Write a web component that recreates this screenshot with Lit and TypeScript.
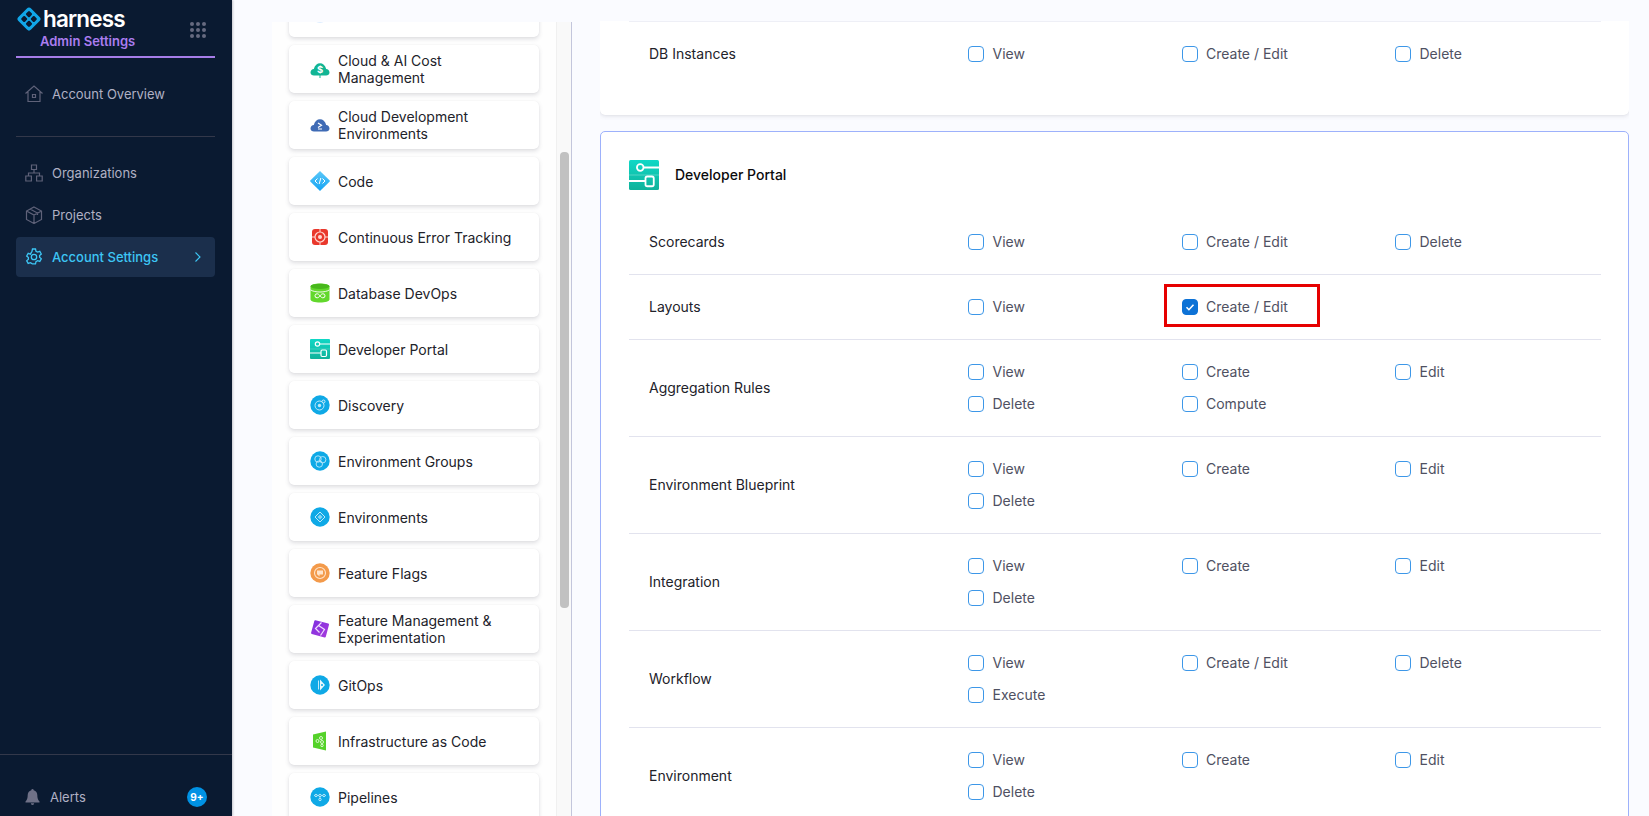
import {LitElement, css, html, svg} from "lit";
import {customElement} from "lit/decorators.js";

// module list on the left, small product icons are hand drawn
const icon = (body: unknown) => html`<svg class="mod-icon" viewBox="0 0 20 20" width="20" height="20">${body}</svg>`;

const circle = (fill: string, inner: unknown) =>
  icon(svg`<circle cx="10" cy="10" r="9.700" fill=${fill}></circle>${inner}`);

const modules: {name: string; icon: unknown}[] = [
  {name: "", icon: circle("#d4e8ff", svg``)},
  {
    name: "Cloud & AI Cost Management",
    icon: icon(svg`<path d="M.5 13.500c0-2.100 1.500-3.400 3.300-3.600C4.700 6.200 7.300 4.300 10 4.300s5.300 1.900 6.200 5.600c1.800.2 3.300 1.500 3.300 3.600 0 2-1.600 3-3.400 3H3.900C2.100 16.500.5 15.500.5 13.500z" fill="#12b594"></path>
      <text x="10" y="14" text-anchor="middle" font-size="9.500" font-weight="700" fill="#fff" font-family="Inter, sans-serif">$</text>
      <rect x="9.500" y="16" width="1" height="3" fill="#12b594"></rect>`),
  },
  {
    name: "Cloud Development Environments",
    icon: icon(svg`<path d="M.5 13.500c0-2.100 1.500-3.400 3.300-3.600C4.700 6.200 7.200 4.200 10 4.200s5.300 2 6.200 5.700c1.800.2 3.300 1.500 3.300 3.600 0 2-1.600 3-3.400 3H3.900C2.100 16.500.5 15.500.5 13.500z" fill="#3f6bb5"></path>
      <path d="M8 8l3.500 2.200L8 12.400M8 14h4" fill="none" stroke="#fff" stroke-width="1.200"></path>`),
  },
  {
    name: "Code",
    icon: icon(svg`<defs><linearGradient id="cg" x1="0" y1="0" x2="0" y2="1"><stop offset="0" stop-color="#5cc8f8"></stop><stop offset="1" stop-color="#14a4f4"></stop></linearGradient></defs>
      <path d="M10 0l9.500 9.300a1 1 0 010 1.400L10 20 .5 10.700a1 1 0 010-1.400z" fill="url(#cg)"></path>
      <path d="M7.500 7.500L5 10l2.500 2.500M12.500 7.500L15 10l-2.500 2.500M10.800 7l-1.600 6" fill="none" stroke="#fff" stroke-width="1"></path>`),
  },
  {
    name: "Continuous Error Tracking",
    icon: icon(svg`<rect x="2" y="2" width="16" height="16" rx="3" fill="#e9382c"></rect>
      <circle cx="10" cy="10" r="5" fill="none" stroke="#ffd8d2" stroke-width="1.200"></circle>
      <circle cx="10" cy="10" r="2" fill="#ffd8d2"></circle>
      <path d="M10 2v3M10 15v3M2 10h3M15 10h3" stroke="#ffd8d2" stroke-width="1"></path>`),
  },
  {
    name: "Database DevOps",
    icon: icon(svg`<path d="M.5 3.500C.5 1.800 4.700.5 10 .5s9.500 1.300 9.500 3v13c0 1.700-4.200 3-9.500 3s-9.500-1.300-9.500-3z" fill="#62d82c"></path>
      <ellipse cx="10" cy="3.300" rx="9.500" ry="2.600" fill="#48b81c"></ellipse>
      <path d="M.5 6.800c2 1.500 5.500 2.200 9.500 2.200s7.500-.7 9.500-2.200" fill="none" stroke="#fff" stroke-width=".9"></path>
      <path d="M10 12.800c-1-1.500-2-2-3-2a2 2 0 000 4c1 0 2-.5 3-2zm0 0c1-1.500 2-2 3-2a2 2 0 010 4c-1 0-2-.5-3-2z" fill="none" stroke="#fff" stroke-width="1"></path>`),
  },
  {name: "Developer Portal", icon: portalIcon(20)},
  {
    name: "Discovery",
    icon: circle("#0fa9e6", svg`<circle cx="9.500" cy="10.500" r="4.500" fill="none" stroke="#bfe9fa" stroke-width="1"></circle>
      <circle cx="9.500" cy="10.500" r="1.700" fill="#bfe9fa"></circle>
      <circle cx="13.500" cy="6.500" r="1.500" fill="#0fa9e6" stroke="#dff5fd" stroke-width=".9"></circle>`),
  },
  {
    name: "Environment Groups",
    icon: circle("#0fa9e6", svg`<circle cx="8" cy="8" r="3.200" fill="none" stroke="#bfe9fa" stroke-width=".9"></circle>
      <circle cx="12.700" cy="8.700" r="3.200" fill="none" stroke="#bfe9fa" stroke-width=".9"></circle>
      <circle cx="9.300" cy="13" r="3.200" fill="none" stroke="#bfe9fa" stroke-width=".9"></circle>`),
  },
  {
    name: "Environments",
    icon: circle("#0fa9e6", svg`<path d="M10 5l5 5-5 5-5-5z" fill="none" stroke="#bfe9fa" stroke-width="1"></path>
      <path d="M10 7.500l2.500 2.500-2.500 2.500L7.500 10z" fill="#bfe9fa" opacity=".7"></path>`),
  },
  {
    name: "Feature Flags",
    icon: circle("#f39a4a", svg`<circle cx="10" cy="10" r="5.500" fill="none" stroke="#ffe5cc" stroke-width="1.100"></circle>
      <path d="M7 7.500h6v4H9.500v2L7.500 11.500H7z" fill="#ffe5cc"></path>`),
  },
  {
    name: "Feature Management & Experimentation",
    icon: icon(svg`<defs><linearGradient id="fm" x1="0" y1="0" x2="1" y2="1"><stop offset="0" stop-color="#7d2fe0"></stop><stop offset="1" stop-color="#a83bdc"></stop></linearGradient></defs>
      <path d="M5.500 1.200l12.800 3.400a1 1 0 01.7 1.200l-3.200 12a1 1 0 01-1.200.7L1.800 15a1 1 0 01-.7-1.200l3.200-11.900a1 1 0 011.200-.7z" fill="url(#fm)"></path>
      <path d="M11.500 3.500L5.500 9.500l4 4M8.500 6.500l6 4-4 6" fill="none" stroke="#f0dcff" stroke-width="1.200"></path>`),
  },
  {
    name: "GitOps",
    icon: circle("#0fa9e6", svg`<path d="M10 4.500l5 5.500-5 5.500z" fill="#eaf8fe"></path>
      <path d="M8.500 5.500v9" stroke="#bfe9fa" stroke-width="1"></path>
      <circle cx="12" cy="10" r="1" fill="#0fa9e6"></circle>`),
  },
  {
    name: "Infrastructure as Code",
    icon: icon(svg`<path d="M3 3.500L16 .5v19L3 16.500z" fill="#55d22a"></path>
      <circle cx="11" cy="7" r="1.500" fill="none" stroke="#e6fbdc" stroke-width=".9"></circle>
      <circle cx="7.500" cy="10" r="1.500" fill="none" stroke="#e6fbdc" stroke-width=".9"></circle>
      <circle cx="12" cy="11" r="1.500" fill="none" stroke="#e6fbdc" stroke-width=".9"></circle>
      <circle cx="12" cy="14.500" r="1.200" fill="none" stroke="#e6fbdc" stroke-width=".9"></circle>`),
  },
  {
    name: "Pipelines",
    icon: circle("#0fa9e6", svg`<path d="M4 8.500h12M10 8.500v3" stroke="#bfe9fa" stroke-width=".8"></path>
      <circle cx="6" cy="8.500" r="1.200" fill="#0fa9e6" stroke="#dff5fd" stroke-width=".8"></circle>
      <circle cx="10" cy="8.500" r="1.200" fill="#0fa9e6" stroke="#dff5fd" stroke-width=".8"></circle>
      <circle cx="14" cy="8.500" r="1.200" fill="#0fa9e6" stroke="#dff5fd" stroke-width=".8"></circle>
      <circle cx="10" cy="12.500" r="1.200" fill="#0fa9e6" stroke="#dff5fd" stroke-width=".8"></circle>`),
  },
];

function portalIcon(size: number) {
  return html`<svg class="mod-icon" viewBox="0 0 20 20" width=${size} height=${size}>
    <defs><linearGradient id="pg${size}" x1="0" y1="0" x2="0" y2="1"><stop offset="0" stop-color="#10d8c6"></stop><stop offset="1" stop-color="#0fb29a"></stop></linearGradient></defs>
    <rect width="20" height="20" rx="1" fill="url(#pg${size})"></rect>
    <path d="M0 10h20" stroke="#e7fbf8" stroke-width=".6" opacity=".35"></path>
    <circle cx="7.500" cy="5" r="2.200" fill="none" stroke="#fff" stroke-width="1.200"></circle>
    <path d="M9.700 5H20M0 14h11" stroke="#fff" stroke-width="1.200"></path>
    <rect x="11" y="11" width="5.500" height="6.500" rx="1.200" fill="none" stroke="#fff" stroke-width="1.200"></rect>
  </svg>`;
}

type Row = {label: string; perms: string[]; checked?: string};

const portalRows: Row[] = [
  {label: "Scorecards", perms: ["View", "Create / Edit", "Delete"]},
  {label: "Layouts", perms: ["View", "Create / Edit"], checked: "Create / Edit"},
  {label: "Aggregation Rules", perms: ["View", "Create", "Edit", "Delete", "Compute"]},
  {label: "Environment Blueprint", perms: ["View", "Create", "Edit", "Delete"]},
  {label: "Integration", perms: ["View", "Create", "Edit", "Delete"]},
  {label: "Workflow", perms: ["View", "Create / Edit", "Delete", "Execute"]},
  {label: "Environment", perms: ["View", "Create", "Edit", "Delete"]},
];

@customElement("app-root")
export class AppRoot extends LitElement {
  static override styles = css`
    :host {
      display: block;
      height: 816px;
      overflow: hidden;
      font-family: Inter, "Noto Sans", sans-serif;
      background: #fafbff;
    }
    .page {
      display: flex;
      height: 816px;
    }

    /* sidebar */
    .sidebar {
      flex: 0 0 232px;
      box-sizing: border-box;
      background: #0a1a31;
      display: flex;
      flex-direction: column;
      color: #b0b1c4;
      font-size: 13px;
      box-shadow: 1px 0 2px rgba(96, 97, 112, 0.35);
    }
    .brand {
      margin: 0 17px 0 16px;
      height: 56px;
      border-bottom: 2px solid #a67de8;
      display: flex;
      justify-content: space-between;
    }
    .brand-left {
      display: flex;
      flex-direction: column;
    }
    .logo-row {
      display: flex;
      align-items: center;
      gap: 2px;
      height: 34px;
      margin-top: 2px;
      margin-left: 1px;
    }
    .logo-text {
      color: #fff;
      font-size: 22.5px;
      font-weight: 600;
      letter-spacing: -0.85px;
      line-height: 34px;
    }
    .admin {
      color: #ab7df0;
      font-size: 13px;
      font-weight: 600;
      line-height: 16px;
      margin-top: -3px;
      margin-left: 24px;
    }
    .dots {
      display: grid;
      grid-template-columns: repeat(3, 4px);
      gap: 2px;
      margin: 22px 9px 0 0;
      align-self: flex-start;
    }
    .dots i {
      width: 4px;
      height: 4px;
      border-radius: 50%;
      background: #666a80;
    }
    .nav-item {
      display: flex;
      align-items: center;
      height: 40px;
      margin: 0 17px 2px 16px;
      padding: 0 9px;
      gap: 9px;
      box-sizing: border-box;
      border-radius: 4px;
    }
    .nav-item svg {
      flex: none;
      color: #5f6279;
    }
    .nav-item.first {
      margin-top: 16px;
    }
    .nav-rule {
      height: 1px;
      background: #33384a;
      margin: 20px 17px 16px 16px;
    }
    .nav-item.active {
      background: #1b2f4c;
      color: #3dc6f5;
      font-weight: 500;
    }
    .nav-item.active svg {
      color: #3dc6f5;
    }
    .nav-item .chev {
      margin-left: auto;
      margin-right: 4px;
    }
    .alerts {
      margin-top: auto;
      height: 62px;
      border-top: 1px solid #33384a;
      display: flex;
      align-items: center;
      padding: 23px 25px 0 25px;
      box-sizing: border-box;
      gap: 10px;
    }
    .alerts svg {
      flex: none;
    }
    .badge {
      margin-left: auto;
      width: 20px;
      height: 20px;
      border-radius: 50%;
      background: #0092e4;
      color: #fff;
      font-size: 10px;
      font-weight: 700;
      text-align: center;
      line-height: 20px;
    }

    /* module list */
    .modules {
      flex: 0 0 284px;
      margin-left: 40px;
      margin-top: 22px;
      height: 794px;
      overflow: hidden;
      background: #fefefe;
    }
    .module-list {
      display: flex;
      flex-direction: column;
      gap: 8px;
      padding: 0 17px;
      margin-top: -33px;
    }
    .module {
      height: 48px;
      flex: none;
      display: flex;
      align-items: center;
      gap: 8px;
      padding-left: 21px;
      background: #fff;
      border-radius: 5px;
      box-shadow: 0 0 1px rgba(40, 41, 61, 0.08), 0 2px 4px rgba(96, 97, 112, 0.2);
      font-size: 14px;
      line-height: 17px;
      color: #22222a;
    }
    .module span {
      max-width: 182px;
    }
    .mod-icon {
      flex: none;
    }
    .rail {
      flex: 0 0 15px;
      box-sizing: border-box;
      margin-top: 22px;
      height: 794px;
      background: #f9f9f9;
      border-left: 1px solid #f0f0f0;
      padding: 130px 2px 0 3px;
    }
    .thumb {
      height: 456px;
      border-radius: 4px;
      background: #c1c1c1;
    }
    .divider {
      flex: 0 0 1px;
      margin-top: 22px;
      background: #c3c6dc;
    }

    /* permissions */
    .perms {
      flex: 0 0 1029px;
      margin-left: 28px;
      margin-top: 21px;
      height: 795px;
      overflow: hidden;
      display: flex;
      flex-direction: column;
      gap: 16px;
    }
    .card {
      background: #fff;
      border-radius: 5px;
      box-shadow: 0 0 1px rgba(40, 41, 61, 0.08), 0 1px 4px rgba(96, 97, 112, 0.18);
      padding: 0 28px 29px 29px;
    }
    .card.clipped {
      border-radius: 0 0 5px 5px;
    }
    .card.selected {
      border: 1px solid #9db1fb;
      padding: 28px 27px 0 28px;
      box-shadow: none;
    }
    .card-head {
      display: flex;
      align-items: center;
      gap: 16px;
      height: 30px;
      margin-bottom: 20px;
      font-size: 14px;
      font-weight: 500;
      color: #0b0b0d;
    }
    .card-head span {
      padding-bottom: 2px;
    }
    .row {
      display: grid;
      grid-template-columns: 319px 1fr;
      align-items: center;
      padding: 16px 0 16px 20px;
      border-bottom: 1px solid #e2e3ee;
      font-size: 14px;
      color: #22222a;
    }
    .row-label {
      padding-bottom: 2px;
    }
    .row.top {
      border-top: 1px solid #eeeff6;
      border-bottom: none;
    }
    .items {
      display: grid;
      grid-template-columns: repeat(3, 213.5px);
      grid-auto-rows: 32px;
    }
    .perm {
      display: flex;
      align-items: center;
      gap: 8.5px;
      color: #4f5162;
      position: relative;
    }
    .perm-name {
      padding-bottom: 2px;
    }
    .box {
      width: 16px;
      height: 16px;
      box-sizing: border-box;
      border: 1px solid #3d97e8;
      border-radius: 4px;
      flex: none;
      display: flex;
      align-items: center;
      justify-content: center;
    }
    .box.on {
      background: #0d72d6;
      border-color: #0d72d6;
    }
    .highlight {
      position: absolute;
      left: -18px;
      top: -7px;
      width: 156px;
      height: 43px;
      box-sizing: border-box;
      border: 3px solid #e60000;
      pointer-events: none;
    }
  `;

  private renderPerm(name: string, checked?: string) {
    const on = name === checked;
    return html`<div class="perm">
      <span class="box ${on ? "on" : ""}">
        ${on
          ? html`<svg width="10" height="10" viewBox="0 0 10 10"><path d="M1.500 5.300l2.400 2.400 4.600-5" fill="none" stroke="#fff" stroke-width="1.600"></path></svg>`
          : ""}
      </span>
      <span class="perm-name">${name}</span>
      ${on ? html`<div class="highlight"></div>` : ""}
    </div>`;
  }

  private renderRow(row: Row) {
    return html`<div class="row">
      <div class="row-label">${row.label}</div>
      <div class="items">${row.perms.map((p) => this.renderPerm(p, row.checked))}</div>
    </div>`;
  }

  override render() {
    return html`<div class="page">
      <aside class="sidebar">
        <div class="brand">
          <div class="brand-left">
            <div class="logo-row">
              <svg width="24" height="24" viewBox="0 0 24 24">
                <path d="M12 .5a3 3 0 012.100.9l8.500 8.500a3 3 0 010 4.200l-8.500 8.500a3 3 0 01-4.200 0l-8.500-8.500a3 3 0 010-4.200l8.500-8.500A3 3 0 0112 .5z" fill="#11a6e8"></path>
                <rect x="9.500" y="4.700" width="5" height="5" rx="1.200" transform="rotate(45 12 7.200)" fill="#0a1a31"></rect>
                <rect x="9.500" y="14.300" width="5" height="5" rx="1.200" transform="rotate(45 12 16.800)" fill="#0a1a31"></rect>
                <rect x="4.700" y="9.500" width="5" height="5" rx="1.200" transform="rotate(45 7.200 12)" fill="#0a1a31"></rect>
                <rect x="14.300" y="9.500" width="5" height="5" rx="1.200" transform="rotate(45 16.800 12)" fill="#0a1a31"></rect>
              </svg>
              <span class="logo-text">harness</span>
            </div>
            <div class="admin">Admin Settings</div>
          </div>
          <div class="dots">${Array.from({length: 9}, () => html`<i></i>`)}</div>
        </div>

        <div class="nav-item first">
          <svg width="18" height="18" viewBox="0 0 18 18" fill="none" stroke="currentColor" stroke-width="1.200">
            <path d="M.5 8.500L9 1l8.500 7.500M3 7v9.500h12V7M7.500 9.500h3v3h-3z"></path>
          </svg>
          <span>Account Overview</span>
        </div>
        <div class="nav-rule"></div>
        <div class="nav-item">
          <svg width="18" height="18" viewBox="0 0 18 18" fill="none" stroke="currentColor" stroke-width="1.200">
            <path d="M6.500 1h5v4.500h-5zM9 5.500V9M3.500 12V9h11v3M.8 12h5.600v5H.8zM11.600 12h5.600v5h-5.600z"></path>
          </svg>
          <span>Organizations</span>
        </div>
        <div class="nav-item">
          <svg width="18" height="18" viewBox="0 0 18 18" fill="none" stroke="currentColor" stroke-width="1.200">
            <path d="M9 1l7.500 4v8.500L9 17.500l-7.500-4V5zM1.500 5L9 9l7.500-4M9 9v8.500M5 3l7.500 4v2"></path>
          </svg>
          <span>Projects</span>
        </div>
        <div class="nav-item active">
          <svg width="18" height="18" viewBox="0 0 18 18" fill="none" stroke="currentColor" stroke-width="1.300">
            <path d="M7.500 1h3l.5 2.200 1.600.9 2.200-.7 1.500 2.600-1.700 1.500v1.800l1.700 1.500-1.500 2.600-2.200-.7-1.600.9-.5 2.200h-3L7 15.600l-1.600-.9-2.200.7-1.500-2.600 1.700-1.500V9.500L1.700 8l1.500-2.600 2.200.7L7 3.200z"></path>
            <circle cx="9" cy="9" r="2.700"></circle>
          </svg>
          <span>Account Settings</span>
          <svg class="chev" width="8" height="12" viewBox="0 0 8 12" fill="none" stroke="currentColor" stroke-width="1.100">
            <path d="M1.500 1.500L6 6l-4.500 4.500"></path>
          </svg>
        </div>

        <div class="alerts">
          <svg width="15" height="16" viewBox="0 0 15 16" fill="#6f7187">
            <path d="M7.500 0a1.300 1.300 0 011.200 1.200C11 1.800 12.300 3.700 12.300 6c0 3 .6 5 2.200 6.500v.9H.5v-.9C2.100 11 2.700 9 2.700 6c0-2.300 1.300-4.200 3.600-4.800A1.300 1.300 0 017.500 0zM5.800 14.200h3.400a1.700 1.700 0 01-3.400 0z"></path>
          </svg>
          <span>Alerts</span>
          <span class="badge">9+</span>
        </div>
      </aside>

      <section class="modules">
        <div class="module-list">
          ${modules.map(
            (m) => html`<div class="module">${m.icon}<span>${m.name}</span></div>`,
          )}
        </div>
      </section>
      <div class="rail"><div class="thumb"></div></div>
      <div class="divider"></div>

      <section class="perms">
        <div class="card clipped">
          <div class="row top">
            <div class="row-label">DB Instances</div>
            <div class="items">${["View", "Create / Edit", "Delete"].map((p) => this.renderPerm(p))}</div>
          </div>
        </div>
        <div class="card selected">
          <div class="card-head">${portalIcon(30)}<span>Developer Portal</span></div>
          ${portalRows.map((r) => this.renderRow(r))}
        </div>
      </section>
    </div>`;
  }
}
